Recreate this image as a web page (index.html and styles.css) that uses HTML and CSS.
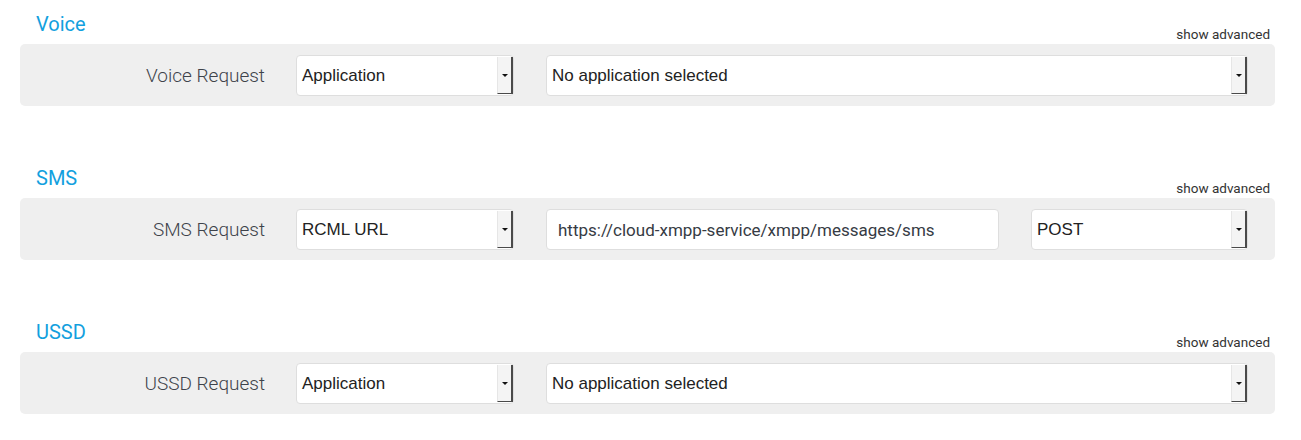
FILE: index.html
```html
<!DOCTYPE html>
<html>
<head>
<meta charset="utf-8">
<link rel="stylesheet" href="styles.css">
</head>
<body>
<div class="page">
  <section class="section">
    <div class="head">
      <h2 class="title">Voice</h2>
      <span class="advanced">show advanced</span>
    </div>
    <div class="panel">
      <div class="label">Voice Request</div>
      <div class="select w-type"><span class="val">Application</span><span class="arrow"><i class="tri"></i></span></div>
      <div class="select grow"><span class="val">No application selected</span><span class="arrow"><i class="tri"></i></span></div>
    </div>
  </section>
  <section class="section">
    <div class="head">
      <h2 class="title">SMS</h2>
      <span class="advanced">show advanced</span>
    </div>
    <div class="panel">
      <div class="label">SMS Request</div>
      <div class="select w-type"><span class="val">RCML URL</span><span class="arrow"><i class="tri"></i></span></div>
      <div class="input w-url">https://cloud-xmpp-service/xmpp/messages/sms</div>
      <div class="select w-method"><span class="val">POST</span><span class="arrow"><i class="tri"></i></span></div>
    </div>
  </section>
  <section class="section">
    <div class="head">
      <h2 class="title">USSD</h2>
      <span class="advanced">show advanced</span>
    </div>
    <div class="panel">
      <div class="label">USSD Request</div>
      <div class="select w-type"><span class="val">Application</span><span class="arrow"><i class="tri"></i></span></div>
      <div class="select grow"><span class="val">No application selected</span><span class="arrow"><i class="tri"></i></span></div>
    </div>
  </section>
</div>
</body>
</html>
```

FILE: styles.css
```css
html, body {
  margin: 0;
  padding: 0;
  background: #ffffff;
}
.page {
  width: 1255px;
  margin-left: 20px;
  padding-top: 12px;
  font-family: Roboto, "Liberation Sans", sans-serif;
}
.section {
  margin-bottom: 60px;
}
.section:last-child {
  margin-bottom: 0;
}
.head {
  display: flex;
  justify-content: space-between;
  align-items: flex-end;
  height: 32px;
}
.title {
  margin: 0 0 0 16px;
  font-weight: 400;
  font-size: 20px;
  line-height: 24px;
  color: #12a0de;
  align-self: flex-start;
}
.advanced {
  font-size: 13.5px;
  line-height: 16px;
  color: #333;
  margin-right: 5px;
  margin-bottom: 2px;
}
.panel {
  display: flex;
  align-items: center;
  gap: 32px;
  height: 62px;
  box-sizing: border-box;
  padding: 11px 27px 10px 0;
  background: #efefef;
  border-radius: 5px;
}
.label {
  width: 245px;
  margin-right: -1px;
  text-align: right;
  font-weight: 300;
  font-size: 19px;
  color: #3e434b;
}
.select, .input {
  height: 41px;
  box-sizing: border-box;
  background: #fff;
  border: 1px solid #dedede;
  border-radius: 4px;
  display: flex;
  align-items: center;
}
.select {
  font-family: "Liberation Sans", Arial, sans-serif;
  font-size: 17px;
  color: #222;
}
.val {
  flex: 1;
  padding-left: 5px;
  white-space: nowrap;
}
.arrow {
  align-self: stretch;
  width: 13px;
  margin: 1px 0 1px 0;
  background: #f4f4f4;
  border-left: 1px solid #e6e6e6;
  border-right: 2px solid #4a4a4a;
  border-bottom: 1px solid #4a4a4a;
  display: flex;
  align-items: center;
  justify-content: center;
}
.tri {
  width: 0;
  height: 0;
  border-left: 3px solid transparent;
  border-right: 3px solid transparent;
  border-top: 3px solid #111;
}
.w-type { width: 218px; }
.w-method { width: 217px; }
.grow { flex: 1; }
.input {
  width: 453px;
  padding-left: 11px;
  font-size: 17px;
  color: #363b44;
}
```
